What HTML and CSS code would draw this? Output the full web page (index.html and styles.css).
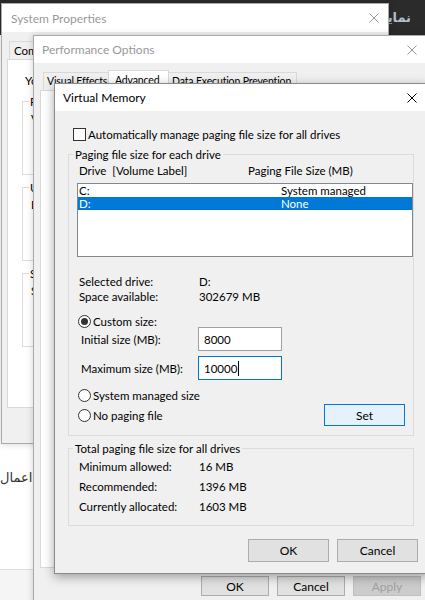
FILE: index.html
```html
<!DOCTYPE html>
<html lang="en">
<head>
    <meta charset="UTF-8">
    <meta name="viewport" content="width=device-width, initial-scale=1.0">
    <title>Virtual Memory</title>
    <link rel="stylesheet" href="styles.css">
</head>
<body>
<div class="desktop">

    <!-- background app -->
    <div class="bg-header"><span class="bg-title">نمایش</span></div>
    <div class="bg-apply">اعمال</div>
    <div class="bg-footer"></div>

    <!-- System Properties -->
    <div class="window win-sys">
        <div class="titlebar">
            <span class="title">System Properties</span>
            <span class="close">
                <svg width="10" height="10" viewBox="0 0 10 10"><path d="M0.5 0.5 L9.5 9.5 M9.5 0.5 L0.5 9.5"/></svg>
            </span>
        </div>
        <div class="win-body">
            <ul class="tabs">
                <li>Computer Name</li>
                <li>Hardware</li>
                <li class="selected">Advanced</li>
                <li>System Protection</li>
                <li>Remote</li>
            </ul>
            <div class="tab-panel sys-panel">
                <p class="note">You must be logged on as an Administrator to make most of these changes.</p>
                <div class="sys-group">
                    <div class="sys-group-title">Performance</div>
                    <p>Visual effects, processor scheduling, memory usage, and virtual memory</p>
                </div>
                <div class="sys-group">
                    <div class="sys-group-title">User Profiles</div>
                    <p>Desktop settings related to your sign-in</p>
                </div>
                <div class="sys-group">
                    <div class="sys-group-title">Startup and Recovery</div>
                    <p>System startup, system failure, and debugging information</p>
                </div>
            </div>
        </div>
    </div>

    <!-- Performance Options -->
    <div class="window win-perf">
        <div class="titlebar">
            <span class="title">Performance Options</span>
            <span class="close">
                <svg width="10" height="10" viewBox="0 0 10 10"><path d="M0.5 0.5 L9.5 9.5 M9.5 0.5 L0.5 9.5"/></svg>
            </span>
        </div>
        <div class="win-body">
            <ul class="tabs perf-tabs">
                <li class="tab-visual">Visual Effects</li>
                <li class="selected tab-adv">Advanced</li>
                <li class="tab-dep">Data Execution Prevention</li>
            </ul>
            <div class="tab-panel perf-panel"></div>
            <div class="buttons perf-buttons">
                <button class="btn">OK</button>
                <button class="btn">Cancel</button>
                <button class="btn disabled">Apply</button>
            </div>
        </div>
    </div>

    <!-- Virtual Memory -->
    <div class="window win-vm focused">
        <div class="titlebar">
            <span class="title">Virtual Memory</span>
            <span class="close">
                <svg width="10" height="10" viewBox="0 0 10 10"><path d="M0.5 0.5 L9.5 9.5 M9.5 0.5 L0.5 9.5"/></svg>
            </span>
        </div>
        <div class="vm-body">
            <div class="check-row">
                <span class="checkbox"></span>
                <span>Automatically manage paging file size for all drives</span>
            </div>

            <div class="group">
                <div class="group-title">Paging file size for each drive</div>
                <div class="list-head">
                    <span class="head-drive">Drive&nbsp; [Volume Label]</span>
                    <span>Paging File Size (MB)</span>
                </div>
                <div class="listbox">
                    <div class="list-row"><span class="col-drive">C:</span><span>System managed</span></div>
                    <div class="list-row selected"><span class="col-drive">D:</span><span>None</span></div>
                </div>

                <div class="info">
                    <div class="info-row"><span class="info-label">Selected drive:</span><span>D:</span></div>
                    <div class="info-row"><span class="info-label">Space available:</span><span>302679 MB</span></div>
                </div>

                <div class="radio-row custom">
                    <span class="radio checked"></span>
                    <span>Custom size:</span>
                </div>
                <div class="field-row first">
                    <span class="field-label">Initial size (MB):</span>
                    <div class="textbox">8000</div>
                </div>
                <div class="field-row">
                    <span class="field-label">Maximum size (MB):</span>
                    <div class="textbox focused-box">10000<span class="caret"></span></div>
                </div>
                <div class="radio-row sysman">
                    <span class="radio"></span>
                    <span>System managed size</span>
                </div>
                <div class="last-row">
                    <div class="radio-row">
                        <span class="radio"></span>
                        <span>No paging file</span>
                    </div>
                    <button class="btn btn-set">Set</button>
                </div>
            </div>

            <div class="group totals">
                <div class="group-title">Total paging file size for all drives</div>
                <div class="total-row"><span class="info-label">Minimum allowed:</span><span>16 MB</span></div>
                <div class="total-row"><span class="info-label">Recommended:</span><span>1396 MB</span></div>
                <div class="total-row"><span class="info-label">Currently allocated:</span><span>1603 MB</span></div>
            </div>

            <div class="buttons vm-buttons">
                <button class="btn btn-wide">OK</button>
                <button class="btn btn-wide">Cancel</button>
            </div>
        </div>
    </div>

</div>
</body>
</html>
```

FILE: styles.css
```css
body {
    margin: 0;
    background-color: #ffffff;
    font-family: Lato, "DejaVu Sans", sans-serif;
    font-size: 11.5px;
    color: #000;
}

.desktop {
    position: relative;
    width: 425px;
    height: 600px;
    overflow: hidden;
}

/* background app */
.bg-header {
    position: absolute;
    top: 0;
    left: 0;
    right: 0;
    height: 35px;
    background-color: #2b2b2b;
}

.bg-title {
    position: absolute;
    right: 14px;
    top: 10px;
    color: #b3c0cc;
    font-family: "DejaVu Sans", sans-serif;
    font-size: 13px;
    font-weight: bold;
}

.bg-apply {
    position: absolute;
    left: 0;
    top: 470px;
    width: 28px;
    text-align: right;
    font-family: "DejaVu Sans", sans-serif;
    font-size: 13px;
    color: #333;
    white-space: nowrap;
}

.bg-footer {
    position: absolute;
    left: 0;
    right: 0;
    top: 569px;
    bottom: 0;
    border-top: 1px solid #dcdcdc;
    background-color: #f5f5f5;
}

/* windows */
.window {
    position: absolute;
    box-sizing: border-box;
    background-color: #f0f0f0;
    border: 1px solid #aaaaaa;
    box-shadow: 0 0 7px rgba(0, 0, 0, 0.18);
}

.window.focused {
    border-color: #8a8a8a;
    box-shadow: 0 3px 10px rgba(0, 0, 0, 0.35);
}

.titlebar {
    display: flex;
    align-items: center;
    justify-content: space-between;
    height: 27px;
    background-color: #fff;
    font-size: 12px;
}

.title {
    padding-left: 8px;
    color: #999;
}

.close {
    display: flex;
    align-items: center;
    justify-content: center;
    width: 30px;
    height: 27px;
}

.close svg path {
    stroke: #999;
    stroke-width: 1;
    fill: none;
}

.focused .title {
    color: #000;
}

.focused .close svg path {
    stroke: #000;
}

.win-sys {
    z-index: 1;
    left: 1px;
    top: 3px;
    width: 388px;
    height: 441px;
}

.win-perf {
    z-index: 2;
    left: 33px;
    top: 35px;
    width: 395px;
    height: 600px;
}

.win-vm {
    z-index: 3;
    left: 54px;
    top: 83px;
    width: 374px;
}

.win-sys .titlebar {
    height: 28px;
}

.win-sys .title {
    padding-left: 9px;
}

.win-sys .close {
    width: 28px;
    height: 28px;
}

/* tabs */
.win-body {
    padding: 0 6px;
}

.win-sys .win-body {
    padding: 0 5px;
}

ul.tabs {
    list-style-type: none;
    display: flex;
    align-items: flex-end;
    margin: 0;
    padding: 0 0 0 2px;
    height: 27px;
    white-space: nowrap;
}

ul.tabs li {
    height: 17px;
    line-height: 17px;
    padding: 0 4px;
    border: 1px solid #d9d9d9;
    border-bottom: none;
    background-color: #f0f0f0;
    margin-right: -1px;
}

ul.tabs li.selected {
    position: relative;
    height: 20px;
    line-height: 18px;
    margin: 0 -1px -1px -1px;
    padding: 0 5px;
    background-color: #fff;
}

ul.perf-tabs {
    padding-left: 3px;
    font-size: 10.5px;
    letter-spacing: -0.15px;
}

ul.perf-tabs li {
    box-sizing: border-box;
    padding: 0 0 0 3px;
}

ul.perf-tabs li.tab-visual {
    width: 67px;
    height: 18px;
}

ul.perf-tabs li.tab-adv {
    width: 61px;
    height: 21px;
    padding-left: 6px;
}

ul.perf-tabs li.tab-dep {
    width: 129px;
    height: 18px;
}

.tab-panel {
    box-sizing: border-box;
    background-color: #fff;
    border: 1px solid #d9d9d9;
}

.sys-panel {
    height: 349px;
    padding: 13px 8px 0 14px;
}

.perf-panel {
    height: 478px;
}

.note {
    margin: 0 0 13px 3px;
    line-height: 15px;
    white-space: nowrap;
}

.sys-group {
    box-sizing: border-box;
    height: 74px;
    margin-bottom: 12px;
    padding-left: 8px;
    border: 1px solid #dcdcdc;
}

.sys-group + .sys-group + .sys-group {
    margin-top: 2px;
}

.sys-group-title {
    display: table;
    margin: -8px 0 0 -2px;
    padding: 0 1px;
    line-height: 16px;
    background-color: #fff;
}

.sys-group p {
    margin: 1px 0 0;
    line-height: 15px;
    white-space: nowrap;
}

/* buttons */
.buttons {
    display: flex;
    justify-content: flex-end;
    gap: 8px;
}

.btn {
    box-sizing: border-box;
    height: 20px;
    width: 68px;
    padding: 0;
    border: 1px solid #adadad;
    background-color: #e1e1e1;
    font-family: inherit;
    font-size: 12px;
    color: #000;
}

.btn.disabled {
    background-color: #cccccc;
    border-color: #bfbfbf;
    color: #a0a0a0;
}

.perf-buttons {
    margin: 8px 0 0 0;
    padding-left: 161px;
    justify-content: flex-start;
}

/* virtual memory */
.vm-body {
    padding: 15px 13px 11px 13px;
}

.check-row {
    display: flex;
    align-items: center;
    gap: 2px;
    height: 16px;
    margin-left: 5px;
    white-space: nowrap;
}

.checkbox {
    box-sizing: border-box;
    width: 13px;
    height: 13px;
    border: 1px solid #333;
    background-color: #fff;
}

.group {
    margin-top: 12px;
    padding: 0 0 9px 10px;
    border: 1px solid #dcdcdc;
}

.group-title {
    display: table;
    margin: -8px 0 0 -6px;
    padding: 0 2px;
    line-height: 16px;
    background-color: #f0f0f0;
    white-space: nowrap;
}

.list-head {
    display: flex;
    line-height: 15px;
}

.head-drive {
    width: 169px;
}

.listbox {
    box-sizing: border-box;
    height: 74px;
    margin: 5px 0 0 -2px;
    border: 1px solid #828790;
    background-color: #fff;
}

.list-row {
    display: flex;
    height: 13px;
    line-height: 13px;
    padding-left: 1px;
}

.list-row.selected {
    background-color: #0078d7;
    color: #fff;
}

.col-drive {
    width: 202px;
}

.info {
    margin-top: 17px;
}

.info-row,
.total-row {
    display: flex;
    line-height: 15px;
}

.info-label {
    width: 120px;
}

.radio-row {
    display: flex;
    align-items: center;
    gap: 2px;
    height: 14px;
    margin-left: -1px;
}

.radio-row.custom {
    margin-top: 10px;
}

.radio-row.sysman {
    margin-top: 8px;
}

.radio {
    box-sizing: border-box;
    width: 13px;
    height: 13px;
    border: 1px solid #333;
    border-radius: 50%;
    background-color: #fff;
    display: flex;
    align-items: center;
    justify-content: center;
}

.radio.checked::after {
    content: "";
    width: 7px;
    height: 7px;
    border-radius: 50%;
    background-color: #333;
}

.field-row {
    display: flex;
    align-items: center;
    margin: 5px 0 0 2px;
}

.field-row.first {
    margin-top: -1px;
}

.field-label {
    width: 117px;
}

.textbox {
    box-sizing: border-box;
    display: flex;
    align-items: center;
    width: 84px;
    height: 24px;
    padding-left: 5px;
    border: 1px solid #a0a0a0;
    background-color: #fff;
}

.textbox.focused-box {
    border-color: #0078d7;
}

.caret {
    width: 1px;
    height: 15px;
    margin-left: 1px;
    background-color: #000;
}

.last-row {
    display: flex;
    align-items: center;
    justify-content: space-between;
    margin-top: 2px;
    padding-right: 8px;
}

.btn-set {
    width: 81px;
    height: 22px;
    border-color: #0078d7;
    background-color: #e5f1fb;
}

.totals {
    padding-bottom: 8px;
}

.total-row {
    line-height: 20px;
}

.totals .total-row:first-of-type {
    margin-top: 1px;
}

.vm-buttons {
    margin: 13px -4px 0 0;
}

.btn-wide {
    width: 81px;
    height: 23px;
}
```
